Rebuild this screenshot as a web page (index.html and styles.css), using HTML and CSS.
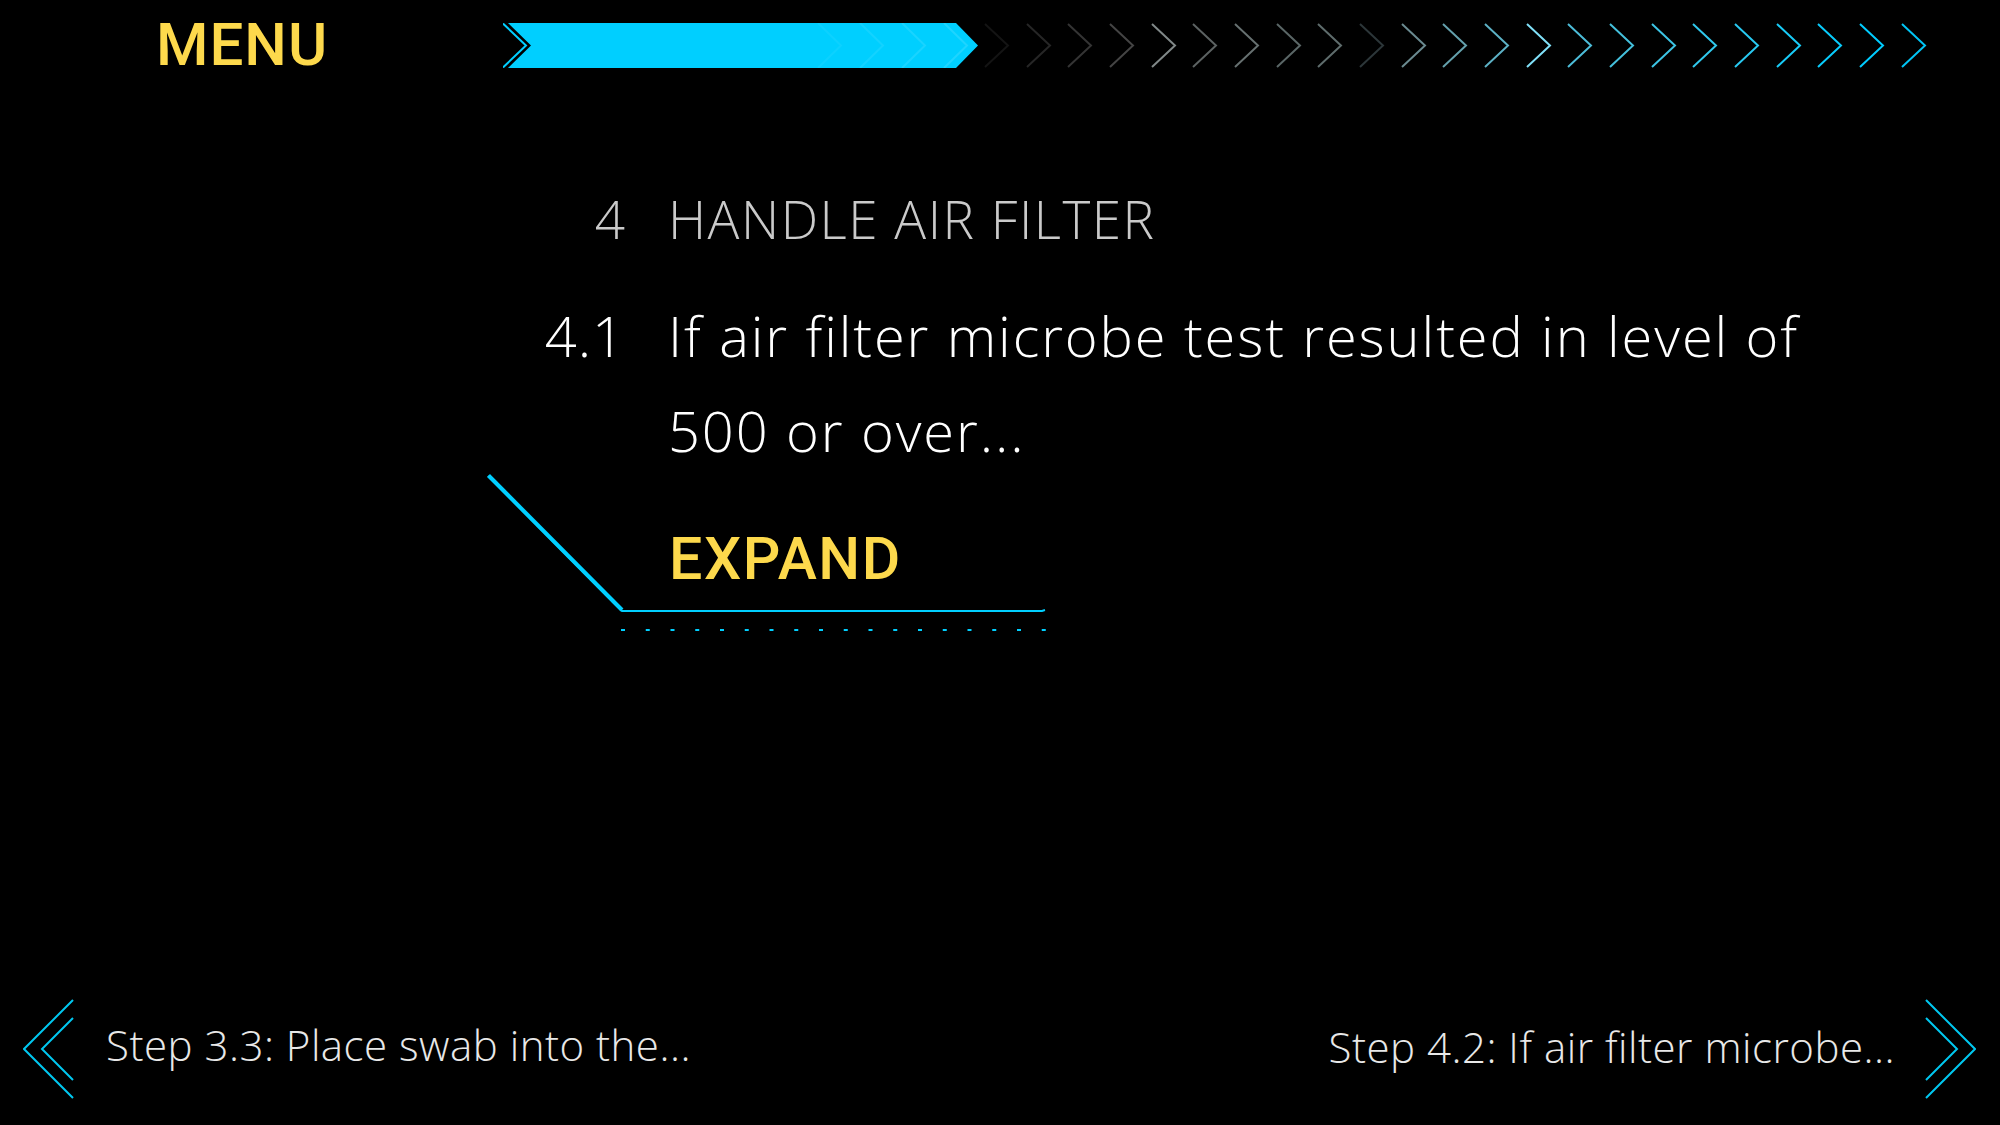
FILE: index.html
```html
<!DOCTYPE html>
<html lang="en">
<head>
<meta charset="utf-8">
<title>Handle Air Filter</title>
<link rel="stylesheet" href="styles.css">
</head>
<body>
<div class="screen">
  <header class="topbar">
    <div class="menu">MENU</div>
    <svg class="progress" width="1427" height="45" viewBox="0 0 1427 45">
      <polyline points="0,0.5 23,22.5 0,44.5" fill="none" stroke="#00cfff" stroke-width="2"/>
      <polygon points="5,0 453,0 475,22.5 453,45 5,45 28,22.5" fill="#00cfff"/>
      <g fill="none" stroke-width="2">
        <polyline points="315,0 338,22.5 315,45" stroke="rgba(255,255,255,0.05)"/>
        <polyline points="357,0 380,22.5 357,45" stroke="rgba(255,255,255,0.08)"/>
        <polyline points="399,0 422,22.5 399,45" stroke="rgba(255,255,255,0.1)"/>
        <polyline points="441,0 464,22.5 441,45" stroke="rgba(255,255,255,0.12)"/>
      </g>
      <g fill="none" stroke-width="2">
        <polyline points="482,1 505,22.5 482,44" stroke="#141414"/>
        <polyline points="524,1 547,22.5 524,44" stroke="#262626"/>
        <polyline points="565,1 588,22.5 565,44" stroke="#343434"/>
        <polyline points="607,1 630,22.5 607,44" stroke="#444444"/>
        <polyline points="649,1 672,22.5 649,44" stroke="#808888"/>
        <polyline points="690,1 713,22.5 690,44" stroke="#5c6262"/>
        <polyline points="732,1 755,22.5 732,44" stroke="#667070"/>
        <polyline points="774,1 797,22.5 774,44" stroke="#5a6666"/>
        <polyline points="815,1 838,22.5 815,44" stroke="#5e6c6c"/>
        <polyline points="857,1 880,22.5 857,44" stroke="#2c3639"/>
        <polyline points="899,1 922,22.5 899,44" stroke="#6a8a90"/>
        <polyline points="940,1 963,22.5 940,44" stroke="#64a0ac"/>
        <polyline points="982,1 1005,22.5 982,44" stroke="#5cb0c4"/>
        <polyline points="1024,1 1047,22.5 1024,44" stroke="#80e0f8"/>
        <polyline points="1065,1 1088,22.5 1065,44" stroke="#4cbcd8"/>
        <polyline points="1107,1 1130,22.5 1107,44" stroke="#44c0dc"/>
        <polyline points="1149,1 1172,22.5 1149,44" stroke="#3cc4e4"/>
        <polyline points="1190,1 1213,22.5 1190,44" stroke="#30c8ec"/>
        <polyline points="1232,1 1255,22.5 1232,44" stroke="#28c8f0"/>
        <polyline points="1274,1 1297,22.5 1274,44" stroke="#18ccf8"/>
        <polyline points="1315,1 1338,22.5 1315,44" stroke="#08ccfc"/>
        <polyline points="1357,1 1380,22.5 1357,44" stroke="#00ccff"/>
        <polyline points="1399,1 1422,22.5 1399,44" stroke="#00c4f4"/>
      </g>
    </svg>
  </header>

  <main class="content">
    <div class="step">
      <div class="num section-num">4</div>
      <div class="section-title">HANDLE AIR FILTER</div>
      <div class="num step-num">4.1</div>
      <div class="step-text">If air filter microbe test resulted in level of 500 or over...</div>
    </div>
    <button class="expand" type="button">
      <svg class="expand-frame" width="562" height="162" viewBox="0 0 562 162">
        <polyline points="1,2 135,137 555,137 558,136" fill="none" stroke="#00cfff" stroke-width="2"/>
        <line x1="1.5" y1="1.5" x2="135" y2="136" stroke="#00cfff" stroke-width="4"/>
        <line x1="134" y1="156" x2="560" y2="156" stroke="#00cfff" stroke-width="2" stroke-dasharray="4 20.75"/>
      </svg>
      <span class="expand-label">EXPAND</span>
    </button>
  </main>

  <footer class="nav">
    <a class="nav-link prev">
      <svg width="52" height="100" viewBox="0 0 52 100">
        <polyline points="50,1 1,50 50,99" fill="none" stroke="#00c8f0" stroke-width="2"/>
        <polyline points="50,19 19,50 50,81" fill="none" stroke="#00c8f0" stroke-width="2"/>
      </svg>
      <span>Step 3.3: Place swab into the...</span>
    </a>
    <a class="nav-link next">
      <span>Step 4.2: If air filter microbe...</span>
      <svg width="52" height="100" viewBox="0 0 52 100">
        <polyline points="2,1 51,50 2,99" fill="none" stroke="#00c8f0" stroke-width="2"/>
        <polyline points="2,19 33,50 2,81" fill="none" stroke="#00c8f0" stroke-width="2"/>
      </svg>
    </a>
  </footer>
</div>
</body>
</html>
```

FILE: styles.css
```css
html, body {
  margin: 0;
  padding: 0;
  background: #000;
}

.screen {
  width: 2000px;
  height: 1125px;
  overflow: hidden;
  display: flex;
  flex-direction: column;
  background: #000;
  font-family: "Open Sans", "Liberation Sans", sans-serif;
  color: #fff;
}

/* ---------- top bar ---------- */
.topbar {
  height: 90px;
  display: flex;
  align-items: center;
  padding-left: 156px;
}

.menu {
  width: 347px;
  font-family: Roboto, "Liberation Sans", sans-serif;
  font-weight: 500;
  font-size: 60px;
  line-height: 90px;
  color: #fdd94c;
  letter-spacing: 1px;
}

.progress {
  display: block;
  flex: none;
}

/* ---------- main ---------- */
.content {
  flex: 1;
  padding-left: 487px;
  padding-top: 93px;
}

.step {
  margin-left: 53px;
  width: 1310px;
  display: grid;
  grid-template-columns: 85px 1fr;
  column-gap: 43px;
  row-gap: 33px;
  font-weight: 300;
}

.num {
  text-align: right;
}

.section-num,
.section-title {
  font-size: 53px;
  line-height: 72px;
  color: #cacaca;
}

.section-title {
  letter-spacing: 1.5px;
}

.step-num,
.step-text {
  font-size: 56px;
  line-height: 95px;
  color: #fff;
}

.step-text {
  letter-spacing: 1.9px;
}

.step-num {
  letter-spacing: 1px;
}

.expand {
  display: grid;
  margin: -4px 0 0 0;
  padding: 0;
  border: 0;
  background: none;
  cursor: pointer;
  width: 562px;
  height: 162px;
}

.expand-frame,
.expand-label {
  grid-area: 1 / 1;
}

.expand-frame {
  display: block;
}

.expand-label {
  align-self: start;
  justify-self: start;
  margin: 45px 0 0 182px;
  font-family: Roboto, "Liberation Sans", sans-serif;
  font-weight: 500;
  font-size: 59px;
  line-height: 80px;
  letter-spacing: 1.6px;
  color: #fdd94c;
}

/* ---------- bottom nav ---------- */
.nav {
  display: flex;
  justify-content: space-between;
  align-items: center;
  padding: 0 24px 26px 23px;
}

.nav-link {
  display: flex;
  align-items: center;
  gap: 31px;
  font-size: 42px;
  font-weight: 300;
  letter-spacing: 0.5px;
  color: #e8e8e8;
}

.next {
  gap: 29px;
}

.nav-link svg {
  display: block;
  flex: none;
}

.nav-link span {
  line-height: 60px;
  margin-top: -8px;
}

.next span {
  margin-top: -4px;
}
```
